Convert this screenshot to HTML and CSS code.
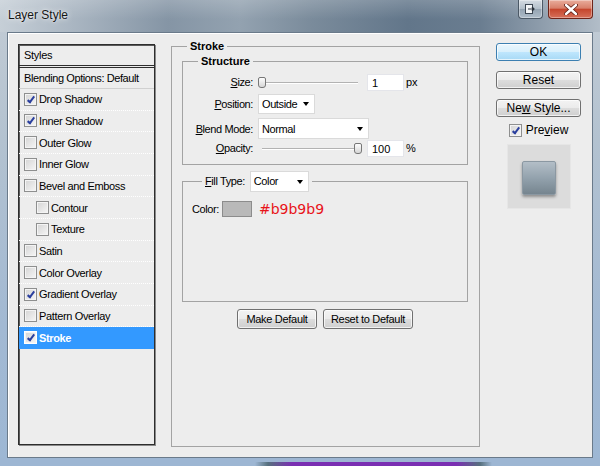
FILE: index.html
```html
<!DOCTYPE html>
<html lang="en">
<head>
    <meta charset="UTF-8">
    <meta name="viewport" content="width=device-width, initial-scale=1.0">
    <title>Layer Style</title>
    <link rel="stylesheet" href="styles.css">
</head>
<body>

<div class="window">
    <div class="titlebar">
        <span class="title">Layer Style</span>
        <div class="caption">
            <div class="cap-btn cap-alt">
                <svg width="11" height="10" viewBox="0 0 11 10">
                    <rect x="0.5" y="0.5" width="7" height="9" fill="#f4f6f8" stroke="#3d4854"/>
                    <path d="M3 5h6M7 3l2 2-2 2" fill="none" stroke="#2b333c" stroke-width="1.2"/>
                </svg>
            </div>
            <div class="cap-btn cap-close">
                <svg width="14" height="11" viewBox="0 0 14 11">
                    <path d="M2 1l10 9M12 1L2 10" stroke="#5a1a10" stroke-width="4" stroke-linecap="round"/>
                    <path d="M2 1l10 9M12 1L2 10" stroke="#ffffff" stroke-width="2.4" stroke-linecap="round"/>
                </svg>
            </div>
        </div>
    </div>

    <div class="client">
        <!-- lista de estilos -->
        <div class="styles-list">
            <div class="list-head">Styles</div>
            <div class="list-blend">Blending Options: Default</div>
            <div class="list-items">
                <div class="item"><span class="chk on"></span>Drop Shadow</div>
                <div class="item"><span class="chk on"></span>Inner Shadow</div>
                <div class="item"><span class="chk"></span>Outer Glow</div>
                <div class="item"><span class="chk"></span>Inner Glow</div>
                <div class="item"><span class="chk"></span>Bevel and Emboss</div>
                <div class="item sub"><span class="chk"></span>Contour</div>
                <div class="item sub"><span class="chk"></span>Texture</div>
                <div class="item"><span class="chk"></span>Satin</div>
                <div class="item"><span class="chk"></span>Color Overlay</div>
                <div class="item"><span class="chk on"></span>Gradient Overlay</div>
                <div class="item"><span class="chk"></span>Pattern Overlay</div>
                <div class="item sel"><span class="chk on"></span>Stroke</div>
            </div>
        </div>

        <!-- painel do meio -->
        <fieldset class="group stroke">
            <legend>Stroke</legend>

            <fieldset class="group structure">
                <legend>Structure</legend>
                <div class="field f1">
                    <label class="lbl"><u>S</u>ize:</label>
                    <div class="slider"><span class="thumb thumb-min"></span></div>
                    <span class="num">1</span>
                    <span class="unit">px</span>
                </div>
                <div class="field f2">
                    <label class="lbl"><u>P</u>osition:</label>
                    <span class="select sel-pos">Outside</span>
                </div>
                <div class="field f3">
                    <label class="lbl"><u>B</u>lend Mode:</label>
                    <span class="select sel-blend">Normal</span>
                </div>
                <div class="field f4">
                    <label class="lbl"><u>O</u>pacity:</label>
                    <div class="slider"><span class="thumb thumb-max"></span></div>
                    <span class="num">100</span>
                    <span class="unit">%</span>
                </div>
            </fieldset>

            <fieldset class="group fill">
                <legend><label><u>F</u>ill Type:</label><span class="select sel-fill">Color</span></legend>
                <div class="color-row">
                    <label>Color:</label>
                    <span class="swatch"></span>
                    <span class="hex">#b9b9b9</span>
                </div>
            </fieldset>

            <div class="def-btns">
                <button type="button" class="btn btn-make">Make Default</button>
                <button type="button" class="btn btn-reset-def">Reset to Default</button>
            </div>
        </fieldset>

        <!-- coluna da direita -->
        <div class="side">
            <button type="button" class="btn big ok">OK</button>
            <button type="button" class="btn big">Reset</button>
            <button type="button" class="btn big">Ne<u>w</u> Style...</button>
            <div class="preview-row"><span class="chk on"></span>Pre<u>v</u>iew</div>
            <div class="preview-box"><div class="preview-square"></div></div>
        </div>
    </div>

    <div class="frame-bottom"></div>
</div>

</body>
</html>
```

FILE: styles.css
```css
body {
    margin: 0;
    font-family: 'Liberation Sans', Arial, sans-serif;
    font-size: 11px;
    color: #000;
    overflow: hidden;
}

.window {
    width: 600px;
    height: 466px;
    display: flex;
    flex-direction: column;
    background: linear-gradient(#c3ccd5, #b3c2d0 30%, #a2b9d3 70%, #9db7d4);
}

/* barra de titulo */
.titlebar {
    height: 32px;
    flex: none;
    display: flex;
    justify-content: space-between;
    padding: 0 7px 0 8px;
    background:
        linear-gradient(rgba(255,255,255,0.18), rgba(255,255,255,0) 60%),
        linear-gradient(90deg, #c6cfd7 0%, #aab6c2 12%, #8595a5 28%, #93a2b0 40%, #7a8b9b 52%, #62768a 68%, #6a7d90 80%, #8d9cab 90%, #b2bdc8 100%);
}

.title {
    font-size: 12px;
    line-height: 31px;
    color: #151515;
    text-shadow: 0 0 6px rgba(255,255,255,0.9), 0 0 2px rgba(255,255,255,0.8);
}

.caption {
    display: flex;
    gap: 5px;
}

.cap-btn {
    height: 19px;
    display: flex;
    align-items: center;
    justify-content: center;
    box-sizing: border-box;
    border: 1px solid #4c5966;
    border-top: none;
    border-radius: 0 0 4px 4px;
    box-shadow: inset 0 0 0 1px rgba(255,255,255,0.35);
}

.cap-alt {
    width: 25px;
    background: linear-gradient(#d5dce3, #b3bfca 48%, #95a4b2 52%, #aebcc9);
}

.cap-close {
    width: 45px;
    border-color: #6e2419;
    background: linear-gradient(#e9ad9c, #d8806a 45%, #c5462d 52%, #d6705a);
}

/* area interna */
.client {
    flex: 1;
    margin: 0 7px;
    padding: 7px 0 0 10px;
    background: #ededed;
    border: 1px solid #6a7a8a;
    box-shadow: inset 1px 1px 0 #fff;
    display: flex;
    align-items: flex-start;
}

.styles-list {
    width: 137px;
    height: 401px;
    margin-top: 4px;
    box-sizing: border-box;
    border: 1px solid #2e2e2e;
    box-shadow: 1px 1px 0 #8a8a8a, inset 1px 1px 0 #5a5a5a;
    display: flex;
    flex-direction: column;
}

.list-head {
    height: 20px;
    line-height: 20px;
    padding-left: 5px;
    border-bottom: 3px double #2e2e2e;
    letter-spacing: -0.3px;
}

.list-blend {
    height: 20px;
    line-height: 20px;
    padding-left: 5px;
    border-bottom: 1px solid #d0d0d0;
    letter-spacing: -0.4px;
}

.list-items {
    height: 260px;
    display: grid;
    grid-template-rows: repeat(12, 1fr);
}

.item {
    display: flex;
    align-items: center;
    padding-left: 5px;
    border-bottom: 1px dotted #fff;
    letter-spacing: -0.35px;
}

.item.sub {
    padding-left: 17px;
}

.item.sel {
    background: #3399ff;
    color: #fff;
    font-weight: bold;
    border-bottom-color: #3399ff;
}

.chk {
    width: 13px;
    height: 13px;
    flex: none;
    box-sizing: border-box;
    margin-right: 2px;
    border: 1px solid #8e8f8f;
    background: linear-gradient(135deg, #d4d4d4, #f6f6f6);
    box-shadow: inset 0 0 0 1px #f4f4f4;
    position: relative;
}

.chk.on::after {
    content: "";
    position: absolute;
    left: 4px;
    top: 1px;
    width: 2px;
    height: 6px;
    border: solid #2a3f9e;
    border-width: 0 2px 2px 0;
    transform: rotate(38deg);
}

.item.sel .chk {
    border-color: #fff;
}

/* grupos */
.group {
    margin: 0;
    min-width: 0;
    box-sizing: border-box;
    border: 1px solid #a3a3a3;
}

.group > legend {
    padding: 0 3px;
    line-height: 13px;
    font-weight: bold;
}

.stroke {
    width: 309px;
    height: 407px;
    margin-left: 16px;
    padding: 2px 11px 0 10px;
}

.stroke > legend {
    margin-left: 5px;
}

.structure {
    padding: 4px 0 7px 0;
}

.structure > legend {
    margin-left: 15px;
}

.field {
    display: flex;
    align-items: center;
    height: 20px;
}

.f2 { margin-top: 2px; }
.f3 { margin-top: 4px; height: 21px; }
.f4 { height: 18px; }

.lbl {
    width: 70px;
    margin-right: 5px;
    text-align: right;
    letter-spacing: -0.4px;
}

.slider {
    width: 104px;
    height: 100%;
    position: relative;
}

.slider::before {
    content: "";
    position: absolute;
    left: 4px;
    right: 4px;
    top: 50%;
    height: 1px;
    background: #b2b2b2;
    border-bottom: 1px solid #fff;
}

.thumb {
    position: absolute;
    top: 50%;
    width: 8px;
    height: 11px;
    margin-top: -5px;
    box-sizing: border-box;
    border: 1px solid #777;
    border-radius: 2px 2px 3px 3px;
    background: linear-gradient(#fdfdfd, #d6d6d6);
}

.thumb-min { left: 0; }
.thumb-max { right: 0; }

.num {
    width: 37px;
    height: 17px;
    margin-left: 5px;
    box-sizing: border-box;
    padding-left: 4px;
    line-height: 16px;
    background: #fff;
    border: 1px solid #e4e5ea;
}

.unit {
    margin-left: 2px;
}

.select {
    position: relative;
    display: flex;
    align-items: center;
    box-sizing: border-box;
    height: 20px;
    padding-left: 3px;
    background: #fff;
    border: 1px solid #dadada;
    font-weight: normal;
    letter-spacing: -0.4px;
}

.select::after {
    content: "";
    position: absolute;
    right: 5px;
    top: 50%;
    margin-top: -2px;
    border-left: 3.5px solid transparent;
    border-right: 3.5px solid transparent;
    border-top: 4px solid #000;
}

.sel-pos { width: 57px; }
.sel-blend { width: 111px; height: 21px; }

.fill {
    margin-top: 6px;
    padding: 9px 0 84px 9px;
}

.fill > legend {
    margin-left: 10px;
    display: flex;
    align-items: center;
    font-weight: normal;
    letter-spacing: -0.4px;
}

.sel-fill {
    width: 59px;
    height: 21px;
    margin-left: 5px;
}

.color-row {
    display: flex;
    align-items: center;
    height: 16px;
    letter-spacing: -0.4px;
}

.swatch {
    width: 30px;
    height: 16px;
    margin-left: 3px;
    box-sizing: border-box;
    background: #b9b9b9;
    border: 1px solid #8c8c8c;
}

.hex {
    margin-left: 7px;
    font-family: 'DejaVu Sans', sans-serif;
    font-size: 14px;
    color: #e8141a;
    letter-spacing: 0;
}

.def-btns {
    display: flex;
    justify-content: center;
    gap: 6px;
    margin-top: 7px;
}

/* botoes */
.btn {
    height: 20px;
    padding: 0;
    box-sizing: border-box;
    font-family: 'Liberation Sans', Arial, sans-serif;
    font-size: 11px;
    color: #000;
    border: 1px solid #707070;
    border-radius: 3px;
    background: linear-gradient(#f3f3f3, #ebebeb 48%, #dcdcdc 52%, #cfcfcf);
    box-shadow: inset 0 0 0 1px rgba(255,255,255,0.7);
    letter-spacing: -0.3px;
}

.btn-make { width: 80px; }
.btn-reset-def { width: 90px; }

.side {
    width: 85px;
    margin: 3px 0 0 16px;
    display: flex;
    flex-direction: column;
}

.btn.big {
    height: 18px;
    font-size: 12px;
    margin-bottom: 10px;
    letter-spacing: 0;
}

.btn.ok {
    border-color: #3c7fb1;
    background: linear-gradient(#eaf6fd, #d9f0fc 48%, #bee6fd 52%, #a7d9f5);
}

.preview-row {
    display: flex;
    align-items: center;
    justify-content: center;
    height: 14px;
    margin-top: -4px;
    font-size: 12px;
}

.preview-row .chk {
    margin-right: 4px;
}

.preview-box {
    width: 64px;
    height: 65px;
    margin: 7px auto 0;
    box-sizing: border-box;
    border: 1px solid #e6e6e6;
    background: #dcdcdc;
    display: flex;
    align-items: center;
    justify-content: center;
}

.preview-square {
    width: 34px;
    height: 34px;
    margin-top: 2px;
    box-sizing: border-box;
    border: 1px solid #8b98a2;
    border-radius: 2px;
    background: linear-gradient(#b3bec7, #93a2ad 50%, #76858f);
    box-shadow: 0 2px 3px rgba(0,0,0,0.35);
}

.frame-bottom {
    height: 8px;
    flex: none;
    background:
        linear-gradient(90deg, transparent 255px, #56707e 268px, #7a2fb2 292px, #7a2fb2 456px, #56707e 480px, transparent 492px) bottom / 100% 4px no-repeat,
        #9db6d3;
}
```
